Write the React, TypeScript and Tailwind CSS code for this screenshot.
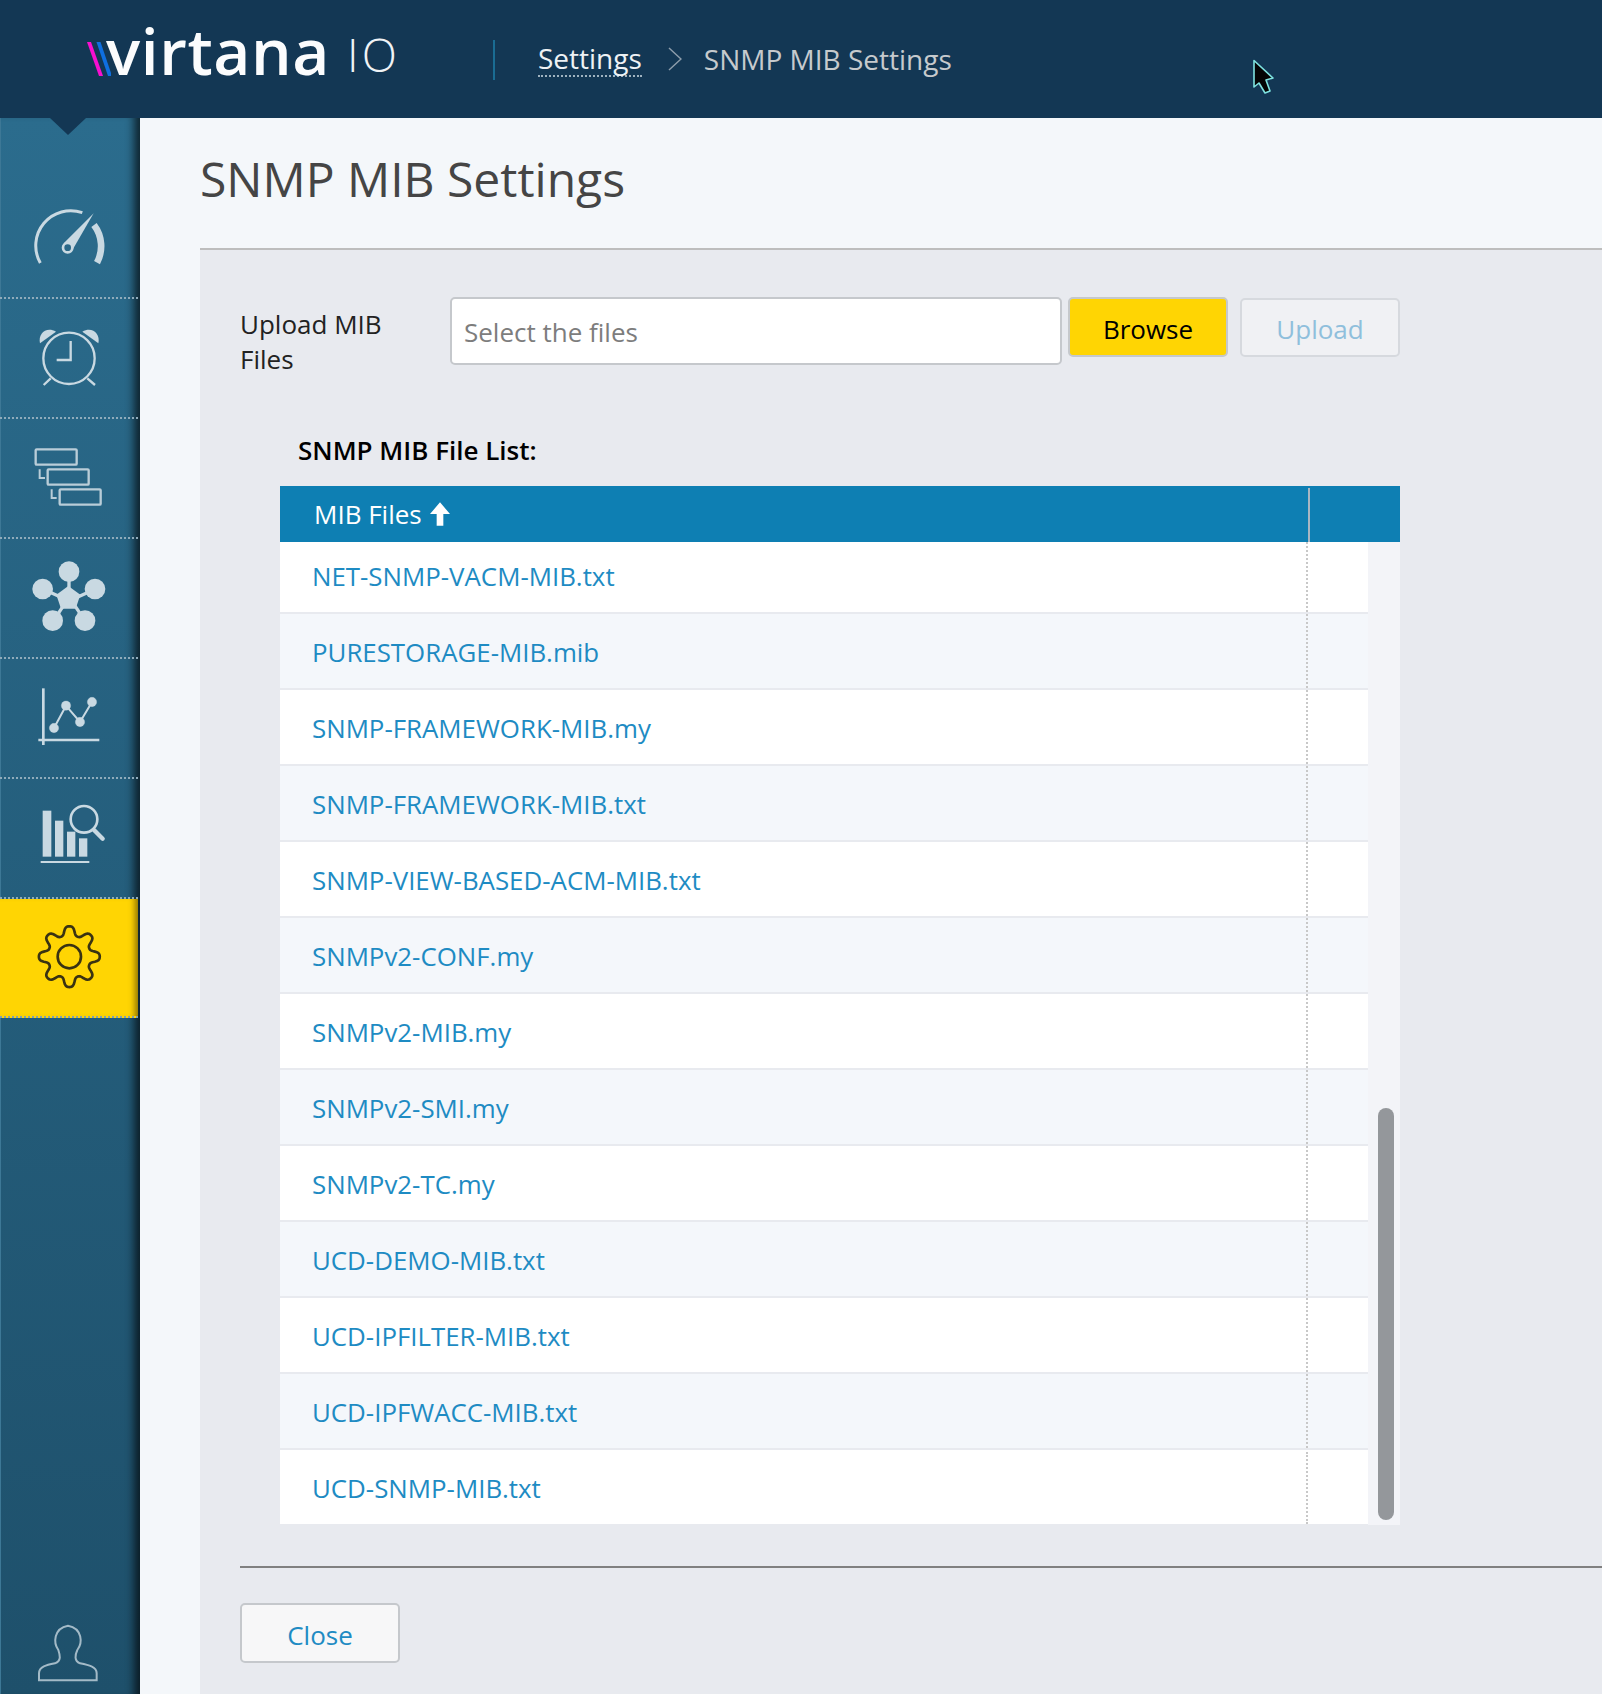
import React from "react";

const files = [
  "NET-SNMP-VACM-MIB.txt",
  "PURESTORAGE-MIB.mib",
  "SNMP-FRAMEWORK-MIB.my",
  "SNMP-FRAMEWORK-MIB.txt",
  "SNMP-VIEW-BASED-ACM-MIB.txt",
  "SNMPv2-CONF.my",
  "SNMPv2-MIB.my",
  "SNMPv2-SMI.my",
  "SNMPv2-TC.my",
  "UCD-DEMO-MIB.txt",
  "UCD-IPFILTER-MIB.txt",
  "UCD-IPFWACC-MIB.txt",
  "UCD-SNMP-MIB.txt",
];

// wavy outline for the settings cog, sampled in polar coordinates
const gearPath = () => {
  const pts: string[] = [];
  for (let i = 0; i < 160; i++) {
    const a = (i / 160) * Math.PI * 2;
    const r = 78 + 15 * Math.tanh(1.4 * Math.cos(8 * a));
    pts.push(`${(208 + r * Math.cos(a)).toFixed(1)} ${(173 + r * Math.sin(a)).toFixed(1)}`);
  }
  return "M" + pts.join("L") + "Z";
};

function NavIcon({ children }: { children: React.ReactNode }) {
  // viewBox is 3x the real pixels of one rail item
  return (
    <svg width="138" height="118" viewBox="0 0 414 354" className="block">
      {children}
    </svg>
  );
}

function NavItem({ children, active }: { children: React.ReactNode; active?: boolean }) {
  return (
    <div className={active ? "h-[119px] w-[138px] border-b-2 border-dotted border-[#7fa0b4] bg-[#ffd503] shadow-[inset_-8px_0_6px_-5px_rgba(90,70,0,0.7)]" : "h-[120px] w-[138px] border-b-2 border-dotted border-[#8fabbb]"}>
      {children}
    </div>
  );
}

function Sidebar() {
  const c = "#c9d9e2";
  return (
    <div className="flex h-full w-[140px] shrink-0 flex-col bg-gradient-to-b from-[#2b6c8d] to-[#1e506b] shadow-[inset_-12px_0_9px_-6px_rgba(0,0,0,0.65),inset_1px_0_0_0_#3d7896]">
      <div className="flex h-[61px] justify-center pr-[4px]">
        <div className="h-0 w-0 border-x-[18px] border-t-[17px] border-x-transparent border-t-[#133754]" />
      </div>
      <NavItem>
        <NavIcon>
          <g transform="translate(-3,3)" fill="none" stroke={c}>
            <path d="M124 249A105 105 0 0 1 250 98" strokeWidth="9" />
            <path d="M285 135A105 105 0 0 1 294 248" strokeWidth="20" />
            <path d="M284 100L222 207L194 190Z" fill={c} stroke="none" />
            <circle cx="206" cy="203" r="14" strokeWidth="8" fill="#2a6888" />
          </g>
        </NavIcon>
      </NavItem>
      <NavItem>
        <NavIcon>
          <g transform="translate(0,-357)" fill="none" stroke={c}>
            <circle cx="207" cy="535" r="77" strokeWidth="7" />
            <path d="M212 483V540H170" strokeWidth="7" />
            <path d="M120 490C113 460 140 438 168 455Z" fill={c} stroke="none" />
            <path d="M295 490C302 460 275 438 247 455Z" fill={c} stroke="none" />
            <path d="M152 595L131 615M262 595L285 615" strokeWidth="7" />
          </g>
        </NavIcon>
      </NavItem>
      <NavItem>
        <NavIcon>
          <g transform="translate(0,-717)" fill="none" stroke={c} strokeWidth="7" opacity="0.9">
            <rect x="107" y="808" width="123" height="46" rx="3" />
            <rect x="143" y="868" width="123" height="46" rx="3" />
            <rect x="179" y="928" width="123" height="46" rx="3" />
            <path d="M119 868V894H135M155 928V954H170" strokeWidth="6" />
          </g>
        </NavIcon>
      </NavItem>
      <NavItem>
        <NavIcon>
          <g transform="translate(0,123)" fill={c}>
            <circle cx="207" cy="-25" r="31" />
            <circle cx="128" cy="27" r="31" />
            <circle cx="285" cy="27" r="31" />
            <circle cx="158" cy="122" r="31" />
            <circle cx="255" cy="122" r="31" />
            <path d="M205 18L241 44L227 86L183 86L169 44Z" />
            <path d="M207 -5V30M135 30L190 55M280 30L225 55M165 115L195 70M250 115L220 70" stroke={c} strokeWidth="10" />
          </g>
        </NavIcon>
      </NavItem>
      <NavItem>
        <NavIcon>
          <g transform="translate(0,-237)" fill={c} stroke={c}>
            <path d="M130 325V495" strokeWidth="8" fill="none" />
            <path d="M115 480H298" strokeWidth="7" fill="none" />
            <path d="M162 444L198 377L240 426L276 366" strokeWidth="6" fill="none" />
            <circle cx="162" cy="444" r="14" />
            <circle cx="198" cy="377" r="14" />
            <circle cx="240" cy="426" r="14" />
            <circle cx="276" cy="366" r="14" />
          </g>
        </NavIcon>
      </NavItem>
      <NavItem>
        <NavIcon>
          <g transform="translate(0,-597)" fill={c}>
            <rect x="128" y="692" width="26" height="138" />
            <rect x="165" y="722" width="25" height="108" />
            <rect x="201" y="755" width="25" height="75" />
            <rect x="237" y="775" width="25" height="55" />
            <path d="M122 846H268" stroke={c} strokeWidth="6" />
            <circle cx="252" cy="718" r="40" fill="#265f7e" stroke={c} strokeWidth="8" />
            <path d="M282 750L308 776" stroke={c} strokeWidth="13" strokeLinecap="round" />
          </g>
        </NavIcon>
      </NavItem>
      <NavItem active>
        <NavIcon>
          <path d={gearPath()} fill="none" stroke="#3a3312" strokeWidth="8" strokeLinejoin="round" />
          <circle cx="208" cy="173" r="35" fill="none" stroke="#3a3312" strokeWidth="8" />
        </NavIcon>
      </NavItem>
      <div className="mt-auto">
        <svg width="138" height="74" viewBox="0 360 414 222" className="block">
          <path
            d="M117 541V520C117 500 140 495 165 490C185 482 180 465 175 450C160 430 160 385 204 377C248 385 248 430 232 450C225 465 222 482 240 490C265 495 290 500 290 520V541Z"
            fill="none"
            stroke="#a3bac7"
            strokeWidth="6"
          />
        </svg>
      </div>
    </div>
  );
}

function Header() {
  return (
    <div className="relative flex h-[118px] shrink-0 items-start bg-[#133754]">
      <div className="ml-[87px] mt-[42px] flex h-[34px] w-[309px] items-center">
        <svg width="24" height="34" viewBox="0 0 24 34" className="block shrink-0">
          <path d="M0 0H4L16 34H12Z" fill="#f80fd0" />
          <path d="M9.5 0H13.5L25 34H21Z" fill="#0f6fe0" />
        </svg>
        <span className="ml-[-5px] text-[64px] font-semibold leading-none tracking-[0.6px] text-[#fbfcfd] [transform:translateY(-8px)]">virtana</span>
        <span className="ml-[17px] text-[46px] font-light leading-none tracking-[3px] text-[#f0f3f6] [transform:translateY(-5px)]">IO</span>
      </div>
      <div className="ml-[97px] mt-[40px] h-[40px] w-[2px] bg-[#1a6c93]" />
      <div className="ml-[43px] mt-[39px] flex h-[40px] items-center text-[28px]">
        <span className="border-b-2 border-dotted border-[#9fb2bf] leading-[34px] text-[#eef2f5]">Settings</span>
        <svg width="14" height="24" viewBox="0 0 14 24" className="ml-[26px] text-[#8d9dab]">
          <path d="M1 1L13 12L1 23" fill="none" stroke="currentColor" strokeWidth="1.5" />
        </svg>
        <span className="ml-[22px] text-[#c6cacd]">SNMP MIB Settings</span>
      </div>
      {/* mouse pointer caught in the capture */}
      <svg width="26" height="38" viewBox="0 0 26 38" className="absolute left-[1251px] top-[58px]">
        <path d="M3 2.5L22 20L15 22L19 33L14 35L8 25L3 29Z" fill="#050505" stroke="#7fe3e0" strokeWidth="1.6" strokeLinejoin="round" />
      </svg>
    </div>
  );
}

function Row({ name, index, last }: { name: string; index: number; last: boolean }) {
  const height = index === 0 ? "h-[72px]" : last ? "h-[74px] pt-[2px]" : "h-[76px]";
  const bg = index % 2 === 0 ? "bg-white" : "bg-[#f4f7fb]";
  const textPad = index === 0 ? "pb-[1px]" : last ? "" : "pt-[2px]";
  return (
    <div className={`flex ${height} ${bg} ${last ? "" : "border-b-2 border-[#e8eaef]"}`}>
      <div className={`flex w-[1026px] items-center pl-[32px] ${textPad} text-[25.85px] text-[#1e8bc3]`}>{name}</div>
      <div className="flex-1 border-l-2 border-dotted border-[#c8c8c8]" />
    </div>
  );
}

export default function App() {
  return (
    <div className="flex h-[1694px] w-full flex-col overflow-hidden font-['Open_Sans',sans-serif]">
      <Header />
      <div className="flex min-h-0 flex-1">
        <Sidebar />
        <div className="flex min-w-0 flex-1 flex-col bg-[#f4f7fa] pl-[60px]">
          <div className="h-[130px] shrink-0 pt-[29px] text-[48px] leading-[64px] text-[#454545]">SNMP MIB Settings</div>
          <div className="flex-1 border-t-2 border-[#bdbdbd] bg-[#e8eaef] pl-[40px] pt-[47px]">
            <div className="flex items-start">
              <div className="w-[210px] pt-[10px] text-[26px] leading-[34.5px] text-[#222]">
                Upload MIB
                <br />
                Files
              </div>
              <div className="flex h-[68px] w-[612px] items-center rounded-[5px] border-2 border-[#c5c8cc] bg-white pl-[12px] pt-[3px] text-[26px] text-[#7d7d7d]">Select the files</div>
              <button className="ml-[6px] h-[60px] w-[160px] rounded-[5px] border-2 border-[#c5c8cc] bg-[#ffd503] pt-[5px] text-[26px] text-black">Browse</button>
              <button className="ml-[12px] mt-[1px] h-[59px] w-[160px] rounded-[5px] border-2 border-[#d6d9de] bg-[#f0f1f4] pt-[3px] text-[26px] text-[#8fbfdc]">Upload</button>
            </div>
            <div className="ml-[58px] mt-[57px] h-[35px] text-[26px] font-semibold leading-[35px] text-black">SNMP MIB File List:</div>
            <div className="ml-[40px] mt-[18px] w-[1120px]">
              <div className="flex h-[56px] bg-[#0e7fb3] text-[26px] text-white">
                <div className="flex w-[1028px] items-center pl-[34px]">
                  MIB Files
                  <svg width="20" height="24" viewBox="0 0 60 70" className="ml-[8px]">
                    <path d="M30 0L60 35H40V70H20V35H0Z" fill="white" />
                  </svg>
                </div>
                <div className="mt-[2px] h-[54px] w-[2px] bg-[#a9b6c2]" />
              </div>
              <div className="flex h-[983px]">
                <div className="w-[1088px]">
                  {files.map((f, i) => (
                    <Row key={f} name={f} index={i} last={i === files.length - 1} />
                  ))}
                </div>
                <div className="flex flex-1 flex-col justify-end bg-[#f3f4f8] pb-[5px] pl-[10px]">
                  <div className="h-[412px] w-[16px] rounded-[8px] bg-[#94979b]" />
                </div>
              </div>
            </div>
            <div className="mt-[41px] h-[2px] bg-[#808080]" />
            <button className="mt-[35px] h-[60px] w-[160px] rounded-[5px] border-2 border-[#c5c8cc] bg-[#f7f7f8] pt-[5px] text-[26px] text-[#1e8bc3]">Close</button>
          </div>
        </div>
      </div>
    </div>
  );
}
